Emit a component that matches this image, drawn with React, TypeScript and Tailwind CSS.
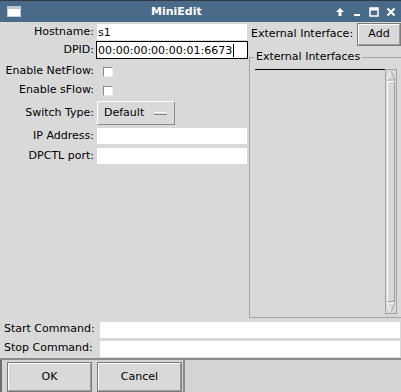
import React from 'react';

const Entry = ({ value, focused, cursor, className = '' }: { value?: string; focused?: boolean; cursor?: boolean; className?: string }) => (
  <div
    className={`h-[18px] bg-white border flex items-center pl-[1px] ${focused ? 'border-black' : 'border-[#d9d9d9]'} ${className}`}
  >
    <span className="leading-none">{value}</span>
    {cursor && <span className="w-px h-[13px] bg-black ml-px" />}
  </div>
);

const Check = () => (
  <div className="w-[10px] h-[10px] bg-white border border-t-[#8a8a8a] border-l-[#8a8a8a] border-r-[#eeeeee] border-b-[#eeeeee]" />
);

const Row = ({ label, h, children }: { label: string; h: string; children: React.ReactNode }) => (
  <div className={`flex items-center ${h}`}>
    <div className="w-[95px] text-right pr-px whitespace-nowrap">{label}</div>
    <div className="flex-1 flex items-center pl-px">{children}</div>
  </div>
);

const TkButton = ({ label, className = '' }: { label: string; className?: string }) => (
  <div className={`border border-[#7c7c7c] ${className}`}>
    <div className="h-full border border-t-white border-l-white border-r-[#9a9a9a] border-b-[#9a9a9a] bg-[#d9d9d9] flex items-center justify-center">
      {label}
    </div>
  </div>
);

const TitleBar = () => (
  <div className="h-[22px] bg-[#4a6a89] border-t border-[#2f3a45] flex items-center relative text-white">
    <div className="ml-[7px] w-[14px] h-[11px] bg-white border border-[#c4ccd4] border-t-[3px] border-t-[#b8c6d6]" />
    <div className="absolute left-[151px] top-[3px] font-bold text-[11px]">MiniEdit</div>
    <div className="ml-auto flex items-center gap-[7px] mr-[5px]">
      <svg width="10" height="10" viewBox="0 0 10 10">
        <path d="M5 1 L9 5 L6.5 5 L6.5 9 L3.5 9 L3.5 5 L1 5 Z" fill="white" />
      </svg>
      <svg width="10" height="10" viewBox="0 0 10 10">
        <rect x="2" y="7" width="6" height="2" fill="white" />
      </svg>
      <svg width="10" height="10" viewBox="0 0 10 10">
        <rect x="1" y="1" width="8" height="8" fill="none" stroke="white" strokeWidth="1.5" />
        <rect x="1" y="1" width="8" height="2.5" fill="white" />
      </svg>
      <svg width="10" height="10" viewBox="0 0 10 10">
        <path d="M1.5 1.5 L8.5 8.5 M8.5 1.5 L1.5 8.5" stroke="white" strokeWidth="2" />
      </svg>
    </div>
  </div>
);

const Scrollbar = () => (
  <div className="w-[12px] border border-[#a3a3a3] flex flex-col bg-[#d9d9d9]">
    <svg width="10" height="11" viewBox="0 0 10 11" className="shrink-0">
      <path d="M5 1 L9 10 L1 10 Z" fill="#d9d9d9" stroke="#ffffff" strokeWidth="1" />
      <path d="M1 10 L9 10 L5 1" fill="none" stroke="#9a9a9a" strokeWidth="1" />
    </svg>
    <div className="flex-1 border border-t-white border-l-white border-r-[#9a9a9a] border-b-[#9a9a9a] mx-px" />
    <svg width="10" height="11" viewBox="0 0 10 11" className="shrink-0">
      <path d="M1 1 L9 1 L5 10 Z" fill="#d9d9d9" stroke="#ffffff" strokeWidth="1" />
      <path d="M9 1 L5 10" fill="none" stroke="#9a9a9a" strokeWidth="1" />
    </svg>
  </div>
);

export default function App() {
  return (
    <div className="w-[401px] h-[392px] flex flex-col bg-[#d9d9d9] text-black text-[11px] font-['DejaVu_Sans',sans-serif] overflow-hidden">
      <TitleBar />
      <div className="flex h-[297px]">
        <div className="w-[248px] flex flex-col pt-px">
          <Row label="Hostname:" h="h-[18px]">
            <Entry value="s1" className="flex-1" />
          </Row>
          <Row label="DPID:" h="h-[18px]">
            <Entry value="00:00:00:00:00:01:6673" focused cursor className="flex-1" />
          </Row>
          <div className="h-[3px]" />
          <Row label="Enable NetFlow:" h="h-[19px]">
            <div className="ml-[7px]"><Check /></div>
          </Row>
          <Row label="Enable sFlow:" h="h-[19px]">
            <div className="ml-[7px]"><Check /></div>
          </Row>
          <Row label="Switch Type:" h="h-[26px]">
            <div className="ml-px w-[78px] h-[24px] border border-t-white border-l-white border-r-[#8a8a8a] border-b-[#8a8a8a] flex items-center pl-[6px]">
              <span>Default</span>
              <div className="ml-auto mr-[7px] w-[13px] h-[3px] border-t border-white border-b border-b-[#8a8a8a] bg-[#d9d9d9]" />
            </div>
          </Row>
          <Row label="IP Address:" h="h-[20px]">
            <Entry className="flex-1" />
          </Row>
          <Row label="DPCTL port:" h="h-[20px]">
            <Entry className="flex-1" />
          </Row>
        </div>
        <div className="flex-1 flex flex-col">
          <div className="flex items-center h-[24px] pl-[3px]">
            <span>External Interface:</span>
            <TkButton label="Add" className="ml-auto w-[44px] h-[23px]" />
          </div>
          <div className="relative mt-[11px] ml-px h-[261px] border-t border-l border-b border-t-[#a3a3a3] border-l-[#a3a3a3] border-b-[#a3a3a3] flex flex-col pt-[11px] pl-[5px] pr-[4px] pb-[3px]">
            <div className="absolute left-[4px] -top-[8px] bg-[#d9d9d9] px-[2px] leading-[14px]">External Interfaces</div>
            <div className="flex-1 flex">
              <div className="flex-1 border-t border-black" />
              <Scrollbar />
            </div>
          </div>
        </div>
      </div>
      <div className="flex flex-col mt-[1px]">
        <div className="flex items-center h-[19px]">
          <div className="w-[99px] pl-[4px] whitespace-nowrap">Start Command:</div>
          <Entry className="flex-1" />
        </div>
        <div className="flex items-center h-[19px]">
          <div className="w-[99px] pl-[4px] whitespace-nowrap">Stop Command:</div>
          <Entry className="flex-1" />
        </div>
      </div>
      <div className="flex-1 border-t-2 border-[#8b8b8b] bg-[#d4d4d4] flex">
        <div className="w-[185px] border-l-2 border-l-[#6f6f6f] border-r-2 border-r-[#8b8b8b] flex gap-[5px] pl-[5px] pt-[2px]">
          <TkButton label="OK" className="w-[85px] h-[30px]" />
          <TkButton label="Cancel" className="w-[85px] h-[30px]" />
        </div>
      </div>
    </div>
  );
}
